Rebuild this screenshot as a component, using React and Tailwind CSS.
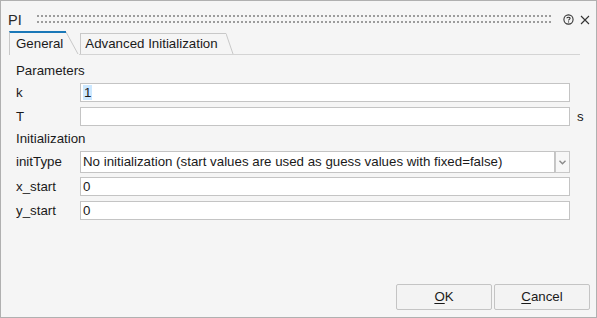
import React from "react";

const font = { fontFamily: '"Liberation Sans", Arial, sans-serif' };

function Input({ value, highlight }) {
  return (
    <div className="w-[490px] h-[19px] border border-[#c4c4c4] bg-white flex items-center pl-[2px] text-[13.3px] leading-none text-[#1a1a1a]">
      {highlight ? <span className="bg-[#cce8ff] px-[1px] h-[15px] flex items-center">{value}</span> : value}
    </div>
  );
}

function Row({ label, children, extra, className = "" }) {
  return (
    <div className={"flex items-center " + className}>
      <div className="w-[64px] text-[13.3px] leading-none text-[#1a1a1a]">{label}</div>
      {children}
      {extra}
    </div>
  );
}

export default function App() {
  return (
    <div
      className="w-[597px] h-[318px] border border-[#b0b0b0] bg-[#f5f5f5] flex flex-col overflow-hidden"
      style={font}
    >
      {/* title bar */}
      <div className="h-[30px] flex items-start pl-[7px] pr-[6px] pt-[11px]">
        <div className="text-[14.5px] leading-[16px] text-[#2a2a2a]">PI</div>
        <svg className="ml-[15px] mt-[3px]" width="516" height="9">
          <defs>
            <pattern id="dots" width="4" height="6" patternUnits="userSpaceOnUse">
              <rect x="0" y="0" width="2" height="2" fill="#9c9c9c" />
            </pattern>
          </defs>
          <rect x="0" y="0" width="516" height="9" fill="url(#dots)" />
        </svg>
        <svg className="ml-[11px] mt-[2px]" width="11" height="11" viewBox="0 0 11 11">
          <circle cx="5.5" cy="5.5" r="4.6" fill="none" stroke="#333" strokeWidth="1.1" />
          <path d="M3.9 4.3 C3.9 2.9 7.1 2.9 7.1 4.3 C7.1 5.4 5.5 5.3 5.5 6.6" fill="none" stroke="#333" strokeWidth="1.1" />
          <rect x="5" y="7.4" width="1.1" height="1.1" fill="#333" />
        </svg>
        <svg className="ml-[6px] mt-[3px]" width="10" height="10" viewBox="0 0 10 10">
          <path d="M1 1 L9 9 M9 1 L1 9" stroke="#333" strokeWidth="1.1" />
        </svg>
      </div>

      {/* tabs */}
      <div className="flex items-end pl-[8px] pr-[16px] h-[24px]">
        <div className="flex items-end h-[24px]">
          <div className="h-[24px] border-l border-[#c8c8c8] border-t-2 border-t-[#1a78b8] pl-[6px] pr-[3px] pt-[3px] text-[13.3px] leading-[16px] text-[#1a1a1a]">
            General
          </div>
          <svg width="13" height="24" viewBox="0 0 13 24">
            <path d="M0 1 L12 23" stroke="#c8c8c8" strokeWidth="1" fill="none" />
          </svg>
        </div>
        <div className="flex-1 flex items-end border-b border-[#d4d4d4] h-[22px]">
          <div className="ml-[1px] h-[21px] border-l border-t border-[#c8c8c8] pl-[4px] pr-[8px] pt-[2px] text-[13.3px] leading-[16px] text-[#1a1a1a]">
            Advanced Initialization
          </div>
          <svg width="8" height="21" viewBox="0 0 8 21">
            <path d="M0 0.5 L7 21" stroke="#c8c8c8" strokeWidth="1" fill="none" />
          </svg>
        </div>
      </div>

      {/* content */}
      <div className="flex flex-col pl-[15px] pt-[6px]">
        <div className="h-[20px] flex items-center text-[13.3px] leading-none text-[#1a1a1a]">Parameters</div>
        <Row label="k" className="mt-[2px]">
          <Input value="1" highlight />
        </Row>
        <Row
          label="T"
          className="mt-[5px]"
          extra={<span className="ml-[7px] text-[13.3px] leading-none text-[#1a1a1a]">s</span>}
        >
          <Input value="" />
        </Row>
        <div className="h-[20px] mt-[3px] flex items-center text-[13.3px] leading-none text-[#1a1a1a]">Initialization</div>
        <Row label="initType" className="mt-[2px]">
          <div className="w-[490px] h-[22px] flex">
            <div className="flex-1 border border-[#c4c4c4] bg-white flex items-center pl-[2px] text-[13.3px] leading-none text-[#1a1a1a]">
              No initialization (start values are used as guess values with fixed=false)
            </div>
            <div className="w-[15px] border border-[#c8c8c8] bg-[#f7f7f7] flex items-center justify-center">
              <svg width="7" height="5" viewBox="0 0 7 5">
                <path d="M0.5 0.8 L3.5 3.8 L6.5 0.8" stroke="#8a8a8a" strokeWidth="1.4" fill="none" />
              </svg>
            </div>
          </div>
        </Row>
        <Row label="x_start" className="mt-[4px]">
          <Input value="0" />
        </Row>
        <Row label="y_start" className="mt-[5px]">
          <Input value="0" />
        </Row>
      </div>

      {/* buttons */}
      <div className="flex-1 flex items-end justify-end gap-[2px] pr-[6px] pb-[7px]">
        <button className="w-[96px] h-[26px] border border-[#c4c4c4] bg-[#f3f3f3] rounded-[2px] text-[13.3px] leading-none text-[#1a1a1a]">
          <span className="underline underline-offset-2">O</span>K
        </button>
        <button className="w-[96px] h-[26px] border border-[#c4c4c4] bg-[#f3f3f3] rounded-[2px] text-[13.3px] leading-none text-[#1a1a1a]">
          <span className="underline underline-offset-2">C</span>ancel
        </button>
      </div>
    </div>
  );
}
